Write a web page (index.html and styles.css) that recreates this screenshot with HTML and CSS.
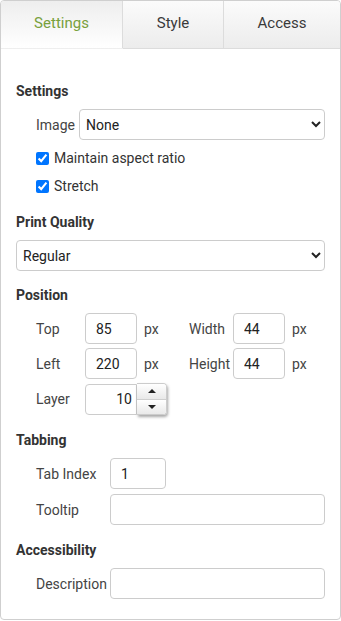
FILE: index.html
```html
<!DOCTYPE html>
<html lang="en">
<head>
  <meta charset="UTF-8" />
  <meta name="viewport" content="width=device-width, initial-scale=1.0"/>
  <title>Image properties</title>
  <link rel="stylesheet" href="styles.css">
</head>
<body>

  <div class="panel">
    <div class="tabs">
      <div class="tab tab-settings active">Settings</div>
      <div class="tab tab-style">Style</div>
      <div class="tab tab-access">Access</div>
    </div>

    <div class="content">
      <section class="group">
        <h3>Settings</h3>
        <div class="row indent">
          <label class="lbl lbl-image" for="image">Image</label>
          <select id="image" class="field grow"><option>None</option></select>
        </div>
        <label class="check indent"><input type="checkbox" checked> Maintain aspect ratio</label>
        <label class="check indent"><input type="checkbox" checked> Stretch</label>
      </section>

      <section class="group group-quality">
        <h3>Print Quality</h3>
        <div class="row">
          <select class="field grow"><option>Regular</option></select>
        </div>
      </section>

      <section class="group group-position">
        <h3>Position</h3>
        <div class="row indent">
          <label class="lbl lbl-pos">Top</label>
          <input class="field num" type="text" value="85">
          <span class="unit">px</span>
          <label class="lbl lbl-size">Width</label>
          <input class="field num" type="text" value="44">
          <span class="unit unit-last">px</span>
        </div>
        <div class="row indent">
          <label class="lbl lbl-pos">Left</label>
          <input class="field num" type="text" value="220">
          <span class="unit">px</span>
          <label class="lbl lbl-size">Height</label>
          <input class="field num" type="text" value="44">
          <span class="unit unit-last">px</span>
        </div>
        <div class="row indent">
          <label class="lbl lbl-pos">Layer</label>
          <input class="field num layer" type="text" value="10">
          <div class="spinner">
            <button class="spin spin-up"><span class="arrow-up"></span></button>
            <button class="spin spin-down"><span class="arrow-down"></span></button>
          </div>
        </div>
      </section>

      <section class="group">
        <h3>Tabbing</h3>
        <div class="row indent">
          <label class="lbl lbl-tab">Tab Index</label>
          <input class="field tabindex" type="text" value="1">
        </div>
        <div class="row indent">
          <label class="lbl lbl-tab">Tooltip</label>
          <input class="field grow" type="text">
        </div>
      </section>

      <section class="group">
        <h3>Accessibility</h3>
        <div class="row indent">
          <label class="lbl lbl-tab">Description</label>
          <input class="field grow" type="text">
        </div>
      </section>
    </div>
  </div>

</body>
</html>
```

FILE: styles.css
```css
body {
  margin: 0;
  background-color: #ffffff;
  color: #444;
  font-family: Roboto, Arial, sans-serif;
  font-size: 14px;
}
.panel {
  width: 341px;
  height: 620px;
  box-sizing: border-box;
  border: 1px solid #cfcfcf;
  border-radius: 4px;
  overflow: hidden;
}

/* tabs */
.tabs {
  display: flex;
}
.tab {
  height: 48px;
  box-sizing: border-box;
  line-height: 44px;
  text-align: center;
  font-size: 15px;
  color: #3a3a3a;
  background: linear-gradient(#fbfbfb, #ececec);
  border-bottom: 1px solid #dcdcdc;
  border-right: 1px solid #dcdcdc;
}
.tab-settings { width: 122px; }
.tab-style { width: 101px; }
.tab-access { width: 116px; border-right: none; }
.tab.active {
  color: #78a03c;
  background: linear-gradient(#eeeeee, #ffffff);
  border-bottom-color: transparent;
}

/* form */
.content {
  padding: 17px 15px 0;
}
.group {
  margin-top: 15px;
}
.group-quality {
  margin-top: 16px;
}
.group-position {
  margin-top: 14px;
}
h3 {
  margin: 0;
  font-size: 14px;
  font-weight: 700;
  line-height: 20px;
  color: #333;
}
.row {
  display: flex;
  align-items: center;
  margin-top: 5px;
}
.row > * {
  flex: none;
}
h3 + .row {
  margin-top: 8px;
}
.group-position .row {
  margin-top: 4px;
}
.group-position h3 + .row {
  margin-top: 8px;
}
.indent {
  padding-left: 20px;
}
.lbl-image { width: 43px; }
.lbl-pos { width: 49px; }
.lbl-size { width: 44px; }
.lbl-tab { width: 74px; }

.field {
  height: 31px;
  box-sizing: border-box;
  border: 1px solid #cccccc;
  border-radius: 4px;
  background-color: #fff;
  color: #222;
  font-family: inherit;
  font-size: 14px;
  padding: 0 10px;
  margin: 0;
  outline: none;
}
select.field {
  padding: 0 2px;
}
.row > .grow {
  flex: 1;
  min-width: 0;
}
.num {
  width: 52px;
}
.tabindex {
  width: 56px;
}
.unit {
  width: 52px;
  box-sizing: border-box;
  padding-left: 7px;
}
.unit-last {
  width: auto;
}

.check {
  display: flex;
  align-items: center;
  gap: 5px;
  height: 20px;
  margin-top: 8px;
  color: #333;
}
.check input {
  width: 13px;
  height: 13px;
  margin: 0;
}

/* layer spinner */
.layer {
  text-align: right;
  padding-right: 4px;
  border-radius: 4px 0 0 4px;
}
.spinner {
  width: 30px;
  height: 32px;
  box-sizing: border-box;
  display: flex;
  flex-direction: column;
  border: 1px solid #cccccc;
  border-left: none;
  border-radius: 0 4px 4px 0;
  box-shadow: 1px 2px 3px rgba(0, 0, 0, 0.35);
  overflow: hidden;
  align-self: flex-start;
}
.spin {
  flex: 1;
  display: flex;
  align-items: center;
  justify-content: center;
  border: none;
  padding: 0;
  background: linear-gradient(#ffffff, #e9e9e9);
}
.spin-up {
  border-bottom: 1px solid #cfcfcf;
}
.arrow-up {
  border-left: 4px solid transparent;
  border-right: 4px solid transparent;
  border-bottom: 4px solid #222;
}
.arrow-down {
  border-left: 4px solid transparent;
  border-right: 4px solid transparent;
  border-top: 4px solid #222;
}
```
